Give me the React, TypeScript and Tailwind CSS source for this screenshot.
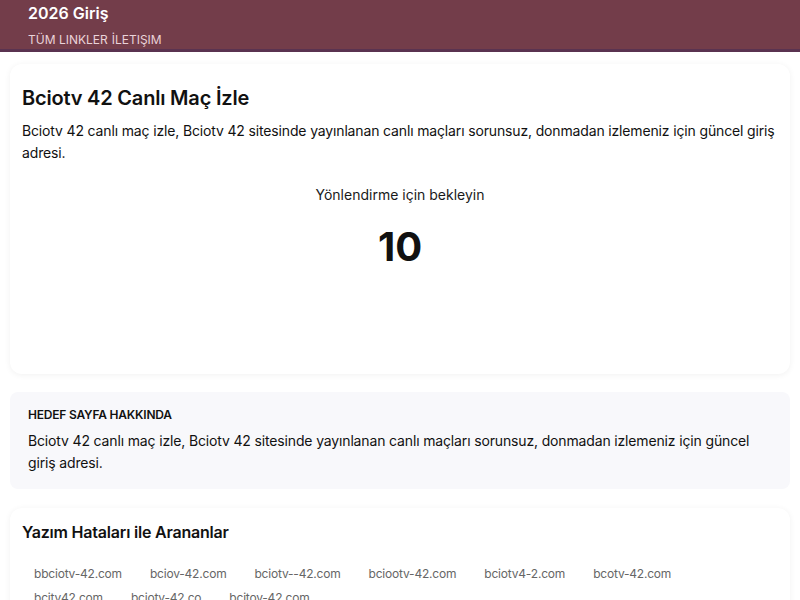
import React from "react";

const chips1 = ["bbciotv-42.com", "bciov-42.com", "bciotv--42.com", "bciootv-42.com", "bciotv4-2.com", "bcotv-42.com"];
const chips2 = ["bcitv42.com", "bciotv-42.co", "bcitov-42.com"];

export default function App() {
  return (
    <div className="min-h-[600px] bg-white text-[#111] font-['Inter','Noto_Sans',sans-serif]">
      <header className="h-[52px] bg-[#733d4a] border-b-[3px] border-[#5a3350] pl-[28px] pt-[1px] flex flex-col gap-[7px]">
        <div className="text-white text-[16px] leading-[24px] font-semibold">2026 Giriş</div>
        <nav className="flex gap-[4px] text-[12px] leading-[16px] text-[#ead3d9] uppercase">
          <a>Tüm Linkler</a>
          <a>İletişim</a>
        </nav>
      </header>
      <main className="px-[10px] flex flex-col">
        <section className="mt-[12px] rounded-xl bg-white shadow-[0_1px_6px_rgba(0,0,0,0.06)] px-[12px] pt-[20px] pb-[103px]">
          <h1 className="text-[20px] leading-[28px] font-semibold tracking-[-0.2px]">Bciotv 42 Canlı Maç İzle</h1>
          <p className="mt-[8px] text-[14px] leading-[22px] text-[#111] tracking-[-0.15px]">
            Bciotv 42 canlı maç izle, Bciotv 42 sitesinde yayınlanan canlı maçları sorunsuz, donmadan izlemeniz için güncel giriş adresi.
          </p>
          <div className="mt-[21px] text-center text-[14px] leading-[20px] text-[#1a1a1a]">Yönlendirme için bekleyin</div>
          <div className="mt-[18px] text-center text-[40px] leading-[48px] font-bold">10</div>
        </section>
        <section className="mt-[18px] rounded-lg bg-[#f8f8fb] px-[18px] pt-[15px] pb-[15px]">
          <h2 className="text-[12px] leading-[16px] font-semibold uppercase tracking-[-0.2px]">Hedef Sayfa Hakkında</h2>
          <p className="mt-[7px] text-[14px] leading-[22px] text-[#111] tracking-[-0.15px]">
            Bciotv 42 canlı maç izle, Bciotv 42 sitesinde yayınlanan canlı maçları sorunsuz, donmadan izlemeniz için güncel giriş adresi.
          </p>
        </section>
        <section className="mt-[19px] rounded-xl bg-white shadow-[0_1px_6px_rgba(0,0,0,0.06)] px-[12px] pt-[12px] pb-[16px]">
          <h2 className="text-[16px] leading-[24px] font-semibold tracking-[-0.2px]">Yazım Hataları ile Arananlar</h2>
          <div className="mt-[18px] flex flex-wrap gap-x-[4px] w-[700px]">
            {[...chips1, ...chips2].map((c) => (
              <span key={c} className="px-[12px] py-[4px] text-[12px] leading-[16px] text-[#666] tracking-[-0.2px]">{c}</span>
            ))}
          </div>
        </section>
      </main>
    </div>
  );
}
